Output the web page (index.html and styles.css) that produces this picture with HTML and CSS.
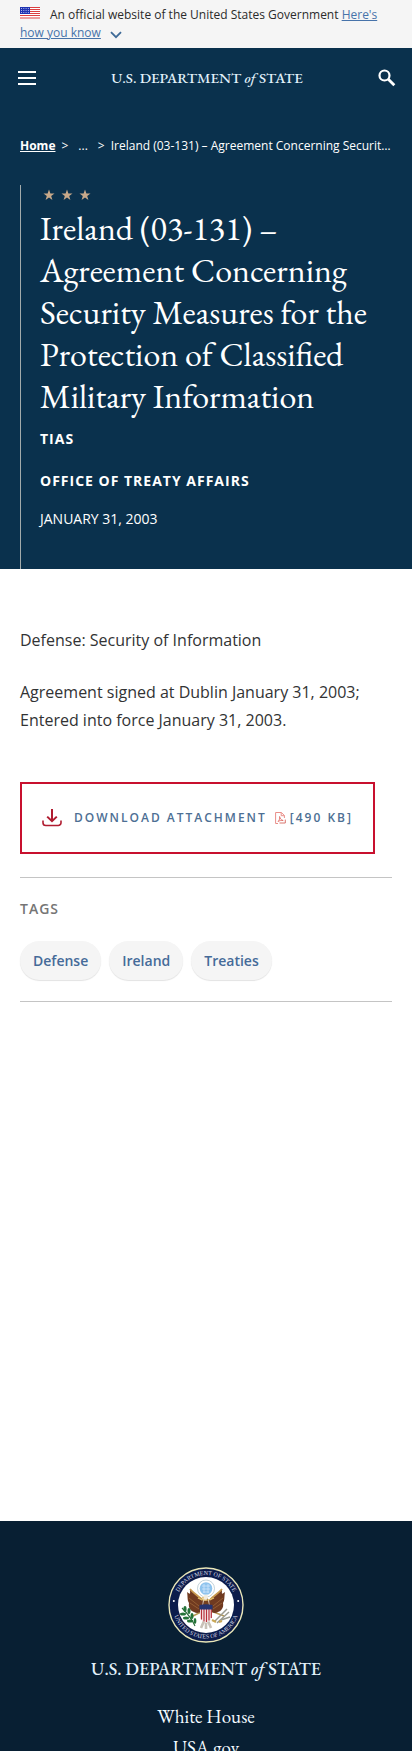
FILE: index.html
```html
<!DOCTYPE html>
<html lang="en">
<head>
<meta charset="utf-8">
<meta name="viewport" content="width=device-width, initial-scale=1">
<title>Ireland (03-131) – United States Department of State</title>
<link rel="stylesheet" href="styles.css">
</head>
<body>
<div class="gov-banner">
  <svg class="flag" viewBox="0 0 20 12" aria-hidden="true">
    <rect width="20" height="12" fill="#fff"/>
    <path d="M0 .5h20M0 2.5h20M0 4.5h20M0 6.5h20M0 8.5h20M0 11h20" stroke="#db3e3f" stroke-width="1"/>
    <rect width="10" height="7" fill="#1e33b1"/>
    <path d="M1 1.5h8M1 3.5h8M1 5.5h8" stroke="#a9b2ea" stroke-width="1" stroke-dasharray="1 1.3"/>
  </svg>An official website of the United States Government <a class="banner-link" href="#">Here's how you know</a>
  <svg class="chevron" viewBox="0 0 12 8" aria-hidden="true"><path d="M1 1.2l5 5 5-5" fill="none" stroke="#3e6a97" stroke-width="1.8"/></svg>
</div>
<header class="site-header">
  <button class="icon-button" aria-label="Menu">
    <svg width="18" height="14" viewBox="0 0 18 14"><path d="M0 1h18M0 7h18M0 13h18" stroke="#fff" stroke-width="2"/></svg>
  </button>
  <a class="wordmark" href="#">U.S. DEPARTMENT <em>of</em> STATE</a>
  <button class="icon-button" aria-label="Search">
    <svg width="18" height="18" viewBox="0 0 18 18"><circle cx="6.5" cy="6.5" r="5" fill="none" stroke="#fff" stroke-width="2.2"/><path d="M10.3 10.3l6 6" stroke="#fff" stroke-width="2.8"/></svg>
  </button>
</header>
<section class="hero">
  <nav class="breadcrumbs" aria-label="Breadcrumb">
    <a class="crumb-home" href="#">Home</a><span>&gt;</span><span class="crumb-more">...</span><span>&gt;</span>
    <span class="crumb-current">Ireland (03-131) – Agreement Concerning Security Measures for the Protection of Classified Military Information</span>
  </nav>
  <div class="hero-body">
    <svg class="stars" viewBox="0 0 48 12" aria-hidden="true">
      <g fill="#c8a98a">
        <path id="star" d="M6 .5l1.4 3.9h4.1L8.2 6.9l1.2 4.1L6 8.6 2.6 11l1.2-4.1L.5 4.4h4.1z"/>
        <use href="#star" x="18"/><use href="#star" x="36"/>
      </g>
    </svg>
    <h1 class="title">Ireland (03-131) – Agreement Concerning Security Measures for the Protection of Classified Military Information</h1>
    <p class="doc-type">TIAS</p>
    <p class="office">OFFICE OF TREATY AFFAIRS</p>
    <p class="date">JANUARY 31, 2003</p>
  </div>
</section>
<main class="content">
  <p class="copy">Defense: Security of Information</p>
  <p class="copy">Agreement signed at Dublin January 31, 2003; Entered into force January 31, 2003.</p>
  <a class="download" href="#">
    <svg class="download-icon" viewBox="0 0 20 18" aria-hidden="true"><path d="M10 0v12M5.2 7.6l4.8 4.6 4.8-4.6" fill="none" stroke="#b01c30" stroke-width="2"/><path d="M1 11.5v2.2a2.8 2.8 0 0 0 2.8 2.8h12.4a2.8 2.8 0 0 0 2.8-2.8v-2.2" fill="none" stroke="#b01c30" stroke-width="1.6"/></svg>
    <span>DOWNLOAD ATTACHMENT</span>
    <svg class="pdf-icon" viewBox="0 0 11 12" aria-hidden="true"><path d="M3 11.5H.6V.5h5.8l3 3V6M6.2.5v3.2h3.2" fill="none" stroke="#e98e88" stroke-width="1"/><path d="M3 9.5c1.6-1.6 2-3.2 1.6-5 .2 2 1.5 3.6 3.6 4-2-.3-3.6.2-5.2 1z" fill="none" stroke="#dd625b" stroke-width=".8"/><path d="M4.5 11h5.8V7.6" fill="none" stroke="#d9766f" stroke-width="1"/></svg>
    <span>[490 KB]</span>
  </a>
  <section class="tags">
    <h2 class="tags-title">TAGS</h2>
    <div class="tag-list">
      <a class="tag" href="#">Defense</a><a class="tag" href="#">Ireland</a><a class="tag" href="#">Treaties</a>
    </div>
  </section>
</main>
<footer class="site-footer">
  <svg class="seal" viewBox="0 0 76 76" role="img" aria-label="Department of State seal">
    <defs>
      <path id="arc-top" d="M8 38a30 30 0 0 1 60 0"/>
      <path id="arc-bottom" d="M4.500 38a33.500 33.500 0 0 0 67 0"/>
    </defs>
    <circle cx="38" cy="38" r="37" fill="#0c1c4b" stroke="#e9e6b8" stroke-width="1.4"/>
    <circle cx="38" cy="38" r="28" fill="#fff"/>
    <g class="seal-text" fill="#d9dbe6">
      <text text-anchor="middle"><textPath href="#arc-top" startOffset="50%">DEPARTMENT OF STATE</textPath></text>
      <text text-anchor="middle"><textPath href="#arc-bottom" startOffset="50%">UNITED STATES OF AMERICA</textPath></text>
    </g>
    <circle cx="5.8" cy="34" r="1" fill="#fff"/><circle cx="70.2" cy="34" r="1" fill="#fff"/>
    <circle cx="38" cy="21.5" r="8.5" fill="#fff" stroke="#a9c0c8" stroke-width=".7"/>
    <circle cx="38" cy="21.5" r="6.3" fill="#8fc4ee"/>
    <path d="M34 19h8M34 22h8M35 25h6M36 17v9M40 17v9" stroke="#cfe6fa" stroke-width=".8"/>
    <path d="M33 45l-10 5M43 44l13 5" stroke="#b99a56" stroke-width="1.4"/>
    <path d="M35 33C31 29 26 27 22 22c0 5 1 6-3 3 1 5 0 8 2 11-1 5 2 8 5 9 3 2 6 1 8-2zM41 33c4-4 9-6 13-11 0 5-1 6 3 3-1 5 0 8-2 11 1 5-2 8-5 9-3 2-6 1-8-2z" fill="#703a20"/>
    <path d="M22 22c4 5 9 7 12 11M54 22c-4 5-9 7-12 11" fill="none" stroke="#c79950" stroke-width="1.8"/>
    <path d="M21 31l10 8M22 36l9 6M55 31l-10 8M54 36l-9 6" stroke="#9c6638" stroke-width=".8"/>
    <path d="M35 38l1-6 2-2 2 2 1 6z" fill="#74401f"/>
    <path d="M35 30c1-3 5-3 5-.5 0 2-1 2.5-1.5 4h-3z" fill="#f2ecdd"/><path d="M35.5 30l-2.5 1 2.5.8" fill="#dda32e"/>
    <path d="M30 31c4 3 11 3 16 0" fill="none" stroke="#dfbd6b" stroke-width="1.2"/>
    <path d="M36 54l-3 7M40 54l3 7M38 54v8" stroke="#c8c1b7" stroke-width="2.6"/>
    <path d="M32 38h12v12c0 3-3 4.500-6 6-3-1.500-6-3-6-6z" fill="#f7e9e8"/>
    <path d="M33.500 42v10.500M36 42v12.500M38.500 42v13M41 42v11.500M43.300 42v9" stroke="#b6303a" stroke-width="1.200"/>
    <path d="M31.500 38q6.500-1.500 13 0v4.500h-13z" fill="#26346f"/>
    <path d="M14 41c4 4 9 9 13 18" fill="none" stroke="#286a37" stroke-width="1.100"/>
    <g fill="#247338"><ellipse cx="17" cy="42" rx="1.600" ry="3"/><ellipse cx="21" cy="44" rx="1.500" ry="3"/><ellipse cx="15" cy="47" rx="3" ry="1.500"/><ellipse cx="18" cy="51" rx="3" ry="1.500"/><ellipse cx="24" cy="49" rx="1.500" ry="3"/><ellipse cx="22" cy="54" rx="3" ry="1.500"/><ellipse cx="27" cy="54" rx="1.400" ry="3"/></g>
    <path d="M47 54l12-12M49 56l12-11M53 53l9-3" stroke="#9a9b91" stroke-width="1.500"/>
    <path d="M44 53l4 2M51 55l3-1" stroke="#c9a755" stroke-width="2"/>
  </svg>
  <a class="footer-wordmark" href="#">U.S. DEPARTMENT <em>of</em> STATE</a>
  <nav class="footer-links" aria-label="Footer">
    <a href="#">White House</a>
    <a href="#">USA.gov</a>
  </nav>
</footer>
</body>
</html>
```
FILE: styles.css
```css
* { box-sizing: border-box; }
body {
  height: 100vh;
  margin: 0;
  overflow: hidden;
  font-family: "Open Sans", sans-serif;
  color: #323334;
  background: #fff;
}
a { color: inherit; text-decoration: none; }
p, h1, h2 { margin: 0; }

.gov-banner {
  padding: 6px 20px;
  background: #f5f5f5;
  font-size: 12px;
  line-height: 18px;
  color: #2b2b2b;
}
.flag { width: 20px; height: 12px; margin-right: 10px; }
.banner-link { color: #4773aa; text-decoration: underline; }
.chevron { width: 12px; height: 8px; margin-left: 6px; vertical-align: -2px; }

.site-header {
  display: flex;
  align-items: center;
  justify-content: space-between;
  height: 60px;
  padding: 0 16px 0 18px;
  background: #0a314d;
}
.icon-button {
  display: flex;
  padding: 0;
  border: 0;
  background: none;
}
.wordmark, .footer-wordmark {
  font-family: "EB Garamond", "Liberation Serif", serif;
  font-weight: 500;
  color: #e2f1fb;
  white-space: nowrap;
}
.wordmark { font-size: 15px; line-height: 20px; }

.hero {
  padding: 26px 20px 0;
  background: #0a314d;
  color: #fff;
}
.breadcrumbs {
  display: flex;
  gap: 6px;
  font-size: 12px;
  line-height: 24px;
}
.crumb-home { font-weight: 700; text-decoration: underline; }
.crumb-more { padding: 0 4px; }
.crumb-current {
  flex: 1;
  min-width: 0;
  overflow: hidden;
  white-space: nowrap;
  text-overflow: ellipsis;
}
.hero-body {
  margin-top: 27px;
  padding: 4px 0 40px 19px;
  border-left: 1px solid #a3abab;
}
.stars { display: block; width: 48px; height: 12px; margin: 0 0 6px 3px; }
.title {
  font-family: "EB Garamond", "Liberation Serif", serif;
  font-size: 34px;
  font-weight: 400;
  line-height: 42px;
}
.doc-type, .office {
  font-size: 14px;
  font-weight: 700;
  line-height: 20px;
  letter-spacing: 1px;
}
.doc-type { margin-top: 12px; }
.office { margin-top: 22px; }
.date { margin-top: 18px; font-size: 14px; line-height: 20px; }

.content { padding: 57px 20px 519px; }
.copy {
  margin-bottom: 24px;
  font-size: 16px;
  line-height: 28px;
}
.download {
  display: flex;
  align-items: center;
  width: fit-content;
  margin-top: 48px;
  padding: 24px 20px;
  border: 2px solid #c8102e;
  color: #4d6f94;
  font-size: 12px;
  font-weight: 600;
  line-height: 20px;
  letter-spacing: 2px;
  white-space: nowrap;
}
.download-icon { width: 20px; height: 18px; margin-right: 12px; }
.pdf-icon { width: 11px; height: 12px; margin: 0 4px 0 8px; }
.tags {
  margin-top: 23px;
  padding: 21px 0;
  border-top: 1px solid #c4c4c4;
  border-bottom: 1px solid #c4c4c4;
}
.tags-title {
  color: #757575;
  font-size: 14px;
  font-weight: 600;
  line-height: 20px;
  letter-spacing: 1px;
}
.tag-list { display: flex; gap: 8px; margin-top: 22px; }
.tag {
  padding: 10px 13px;
  border-radius: 20px;
  background: #f5f5f5;
  box-shadow: 0 1px 1px #e3e3e3;
  color: #456b99;
  font-size: 14px;
  font-weight: 600;
  line-height: 19px;
}

.site-footer {
  display: flex;
  flex-direction: column;
  align-items: center;
  padding-top: 46px;
  background: #081f33;
}
.seal { width: 76px; height: 76px; }
.seal-text { font: 6px "Liberation Serif", serif; }
.footer-wordmark { margin-top: 14px; font-size: 18px; line-height: 24px; }
.footer-links {
  display: flex;
  flex-direction: column;
  align-items: center;
  margin-top: 20px;
  color: #f3faff;
  font-family: "EB Garamond", "Liberation Serif", serif;
  font-size: 19px;
  line-height: 31px;
}
```
